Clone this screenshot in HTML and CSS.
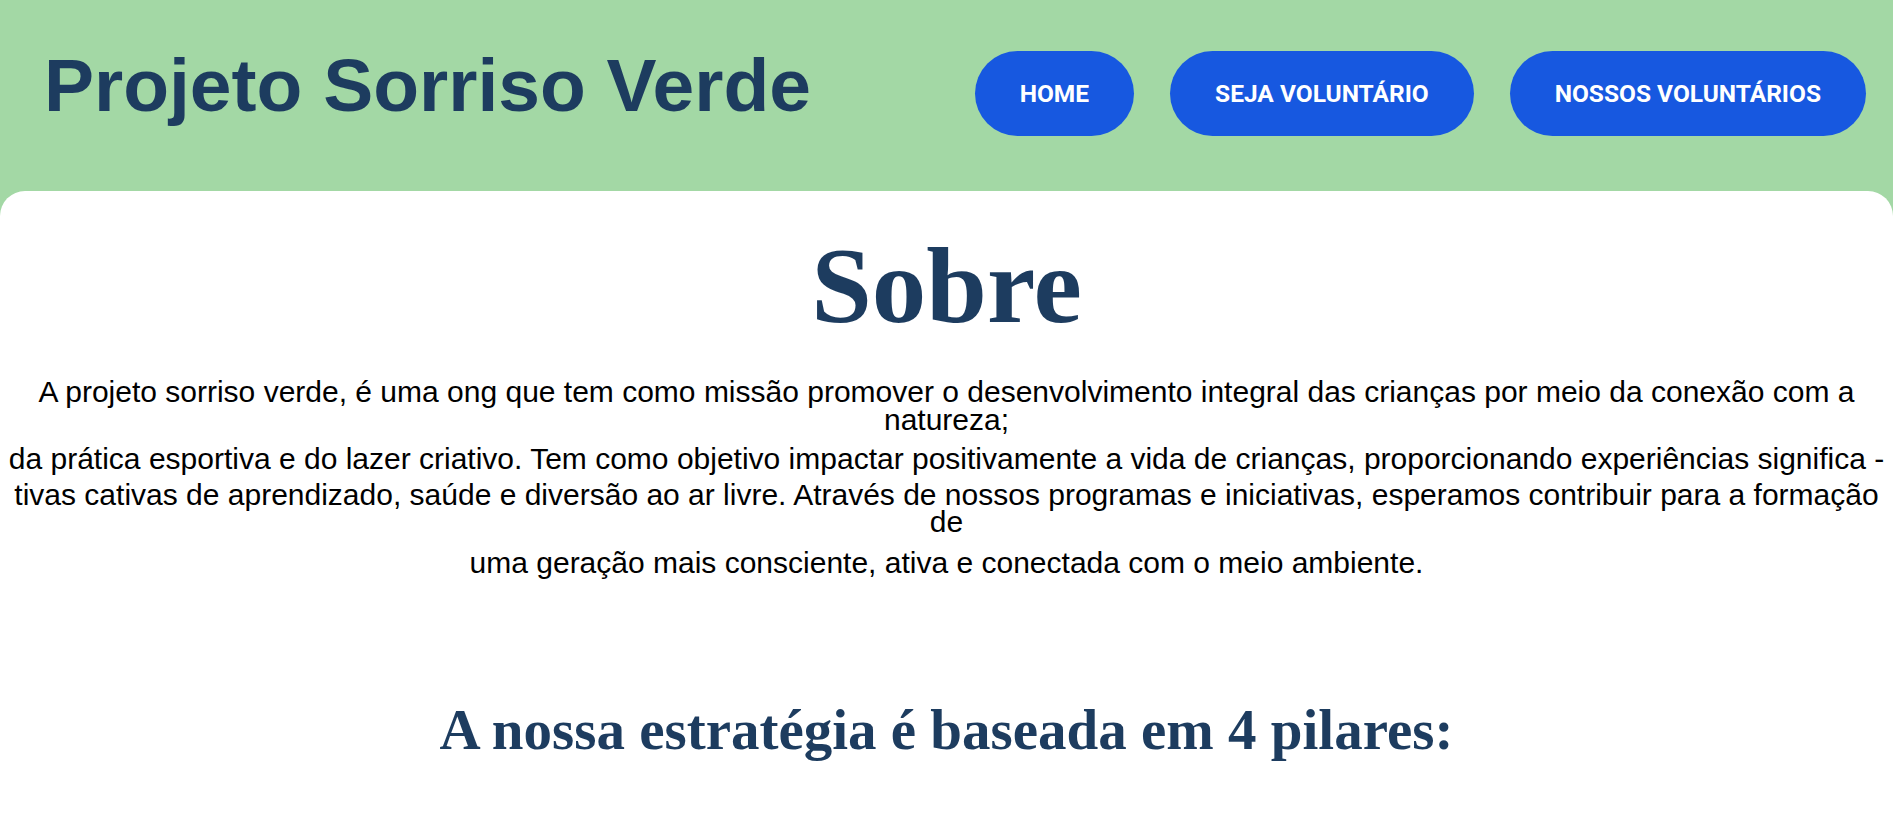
FILE: index.html
```html
<!DOCTYPE html>
<html lang="pt-BR">
<head>
<meta charset="utf-8">
<title>Projeto Sorriso Verde</title>
<link rel="stylesheet" href="styles.css">
</head>
<body>
<header class="topbar">
  <h1 class="brand">Projeto Sorriso Verde</h1>
  <nav class="nav">
    <a class="btn" href="#">HOME</a>
    <a class="btn" href="#">SEJA VOLUNTÁRIO</a>
    <a class="btn" href="#">NOSSOS VOLUNTÁRIOS</a>
  </nav>
</header>
<main class="card">
  <h2 class="title">Sobre</h2>
  <div class="about">
    <p class="about-line wrap-first">A projeto sorriso verde, é uma ong que tem como missão promover o desenvolvimento integral das crianças por meio da conexão com a natureza;</p>
    <p class="about-line gap-md">da prática esportiva e do lazer criativo. Tem como objetivo impactar positivamente a vida de crianças, proporcionando experiências significa -</p>
    <p class="about-line gap-sm wrap-tall">tivas cativas de aprendizado, saúde e diversão ao ar livre. Através de nossos programas e iniciativas, esperamos contribuir para a formação de</p>
    <p class="about-line gap-lg">uma geração mais consciente, ativa e conectada com o meio ambiente.</p>
  </div>
  <h3 class="subtitle">A nossa estratégia é baseada em 4 pilares:</h3>
</main>
</body>
</html>
```
FILE: styles.css
```css
html, body {
  margin: 0;
  padding: 0;
  background: #a3d8a5;
}

body {
  font-family: "Liberation Sans", Arial, sans-serif;
  min-height: 819px;
  display: flex;
  flex-direction: column;
}

.topbar {
  height: 191px;
  box-sizing: border-box;
  display: flex;
  justify-content: space-between;
  align-items: flex-start;
  padding: 0 27px 0 44px;
}

.brand {
  margin: 43px 0 0;
  font-family: "Liberation Sans", Arial, sans-serif;
  font-size: 75px;
  line-height: 85px;
  font-weight: 700;
  color: #1d3c5f;
}

.nav {
  display: flex;
  gap: 36px;
  margin-top: 51px;
}

.btn {
  display: block;
  background: #1758e0;
  color: #ffffff;
  font-family: Roboto, "Open Sans", sans-serif;
  font-weight: 700;
  font-size: 24.5px;
  line-height: 33px;
  padding: 26px 45px;
  border-radius: 43px;
  text-decoration: none;
  white-space: nowrap;
}

.card {
  flex: 1;
  background: #ffffff;
  border-radius: 25px 25px 0 0;
  padding-top: 33px;
}

.title {
  margin: 0;
  text-align: center;
  font-family: "Liberation Serif", "Times New Roman", serif;
  font-weight: 700;
  font-size: 109px;
  line-height: 123px;
  color: #1d3c5f;
}

.about {
  margin-top: 31px;
  padding: 0 5px;
  text-align: center;
  font-family: "Liberation Sans", Arial, sans-serif;
  font-size: 30px;
  line-height: 26px;
  color: #000000;
}

.about-line {
  margin: 0;
}

.wrap-first {
  line-height: 28px;
}

.gap-md {
  margin-top: 12px;
}

.gap-lg {
  margin-top: 15px;
}

.gap-sm {
  margin-top: 9px;
}

.wrap-tall {
  line-height: 27px;
}

.subtitle {
  margin: 122px 0 0;
  text-align: center;
  font-family: "Liberation Serif", "Times New Roman", serif;
  font-weight: 700;
  font-size: 57px;
  line-height: 64px;
  color: #1d3c5f;
}
```
